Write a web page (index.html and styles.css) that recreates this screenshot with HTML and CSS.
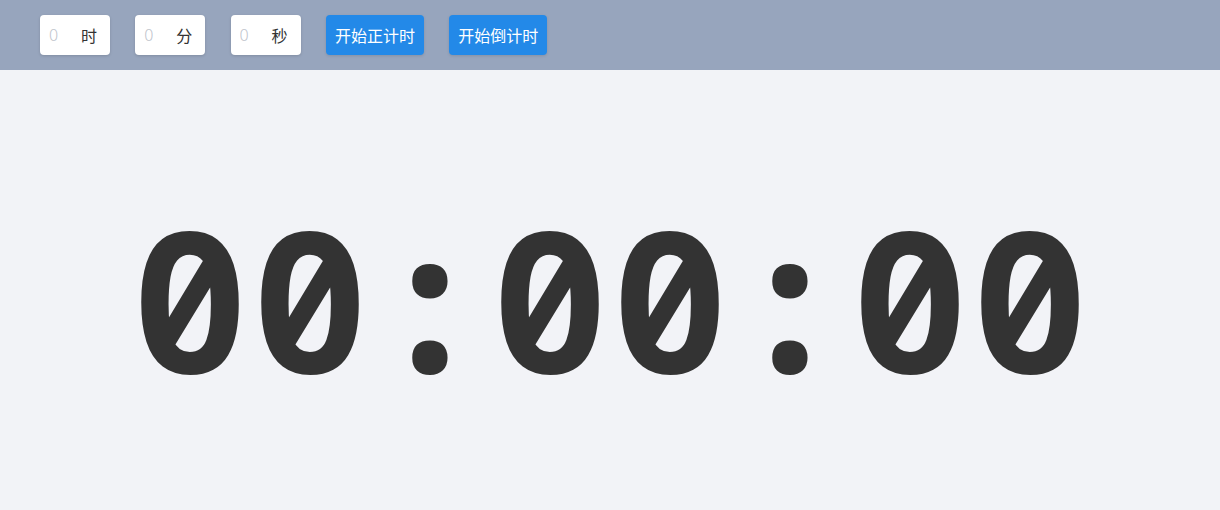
FILE: index.html
```html
<!DOCTYPE html>
<html lang="zh">
<head>
<meta charset="utf-8">
<title>计时器</title>
<link rel="stylesheet" href="styles.css">
</head>
<body>
<header class="toolbar">
  <label class="field"><input class="num" type="text" placeholder="0"><span class="unit">时</span></label>
  <label class="field"><input class="num" type="text" placeholder="0"><span class="unit">分</span></label>
  <label class="field"><input class="num" type="text" placeholder="0"><span class="unit">秒</span></label>
  <button class="btn">开始正计时</button>
  <button class="btn">开始倒计时</button>
</header>
<main class="stage">
  <div class="clock">00:00:00</div>
</main>
</body>
</html>
```
FILE: styles.css
```css
* { box-sizing: border-box; }
html, body { margin: 0; height: 100%; }
body {
  background: #f2f3f7;
  font-family: "Noto Sans CJK SC", "Noto Sans", sans-serif;
  display: flex;
  flex-direction: column;
}
.toolbar {
  height: 70px;
  flex: none;
  background: #97a5bd;
  display: flex;
  align-items: center;
  gap: 25.3px;
  padding-left: 40px;
}
.field {
  width: 70px;
  height: 40px;
  background: #fff;
  border-radius: 4px;
  box-shadow: 0 1px 3px rgba(0,0,0,0.15);
  display: flex;
  align-items: center;
  padding: 0 13px 0 9px;
}
.num {
  width: 30px;
  border: 0;
  outline: 0;
  padding: 0;
  font: 300 16px "Noto Sans", sans-serif;
  color: #333;
  background: transparent;
  flex: none;
}
.num::placeholder { color: #c0c4cc; }
.unit {
  margin-left: auto;
  font-size: 16px;
  color: #333;
}
.btn {
  height: 40px;
  padding: 0 9px;
  border: 0;
  border-radius: 4px;
  background: #2389e8;
  color: #fff;
  font: 16px "Noto Sans CJK SC", sans-serif;
  box-shadow: 0 1px 3px rgba(0,0,0,0.12);
}
.stage {
  flex: 1;
  display: flex;
  justify-content: center;
  align-items: center;
}
.clock {
  font: 700 195px "Noto Sans Mono", "DejaVu Sans Mono", monospace;
  letter-spacing: 3px;
  padding-left: 3px;
  color: #333;
  line-height: 1;
  margin-top: 14px;
}
```
